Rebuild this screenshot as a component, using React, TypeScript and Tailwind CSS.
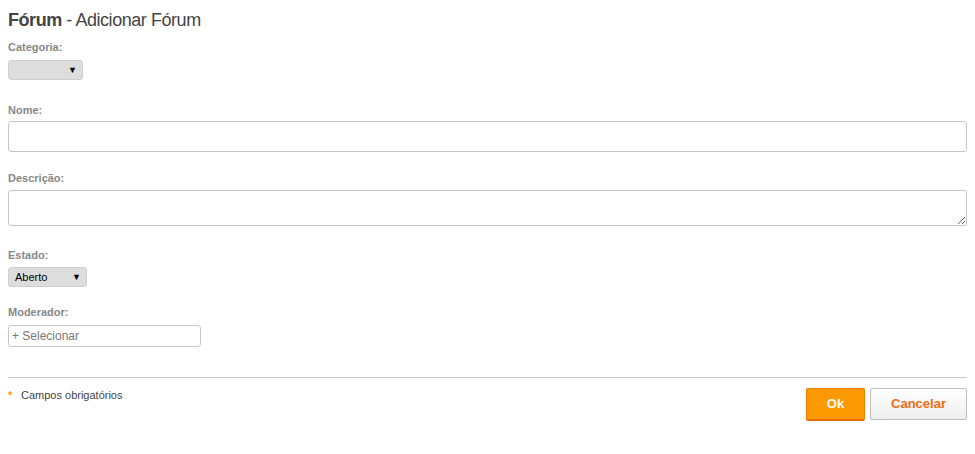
import React from 'react';

const Label = ({ children, className = '' }: { children: React.ReactNode; className?: string }) => (
  <label className={`block text-[11px] leading-[13px] font-bold text-[#888] ${className}`}>{children}</label>
);

const FakeSelect = ({ value, width, className = '' }: { value: string; width: string; className?: string }) => (
  <div
    className={`flex items-center justify-between h-[20px] ${width} bg-[#dddddd] border border-[#cfcfcf] rounded-[3px] pl-[6px] pr-[5px] text-[11px] text-black ${className}`}
  >
    <span>{value}</span>
    <span className="text-[9px] leading-none">▼</span>
  </div>
);

export default function App() {
  return (
    <div className="font-['Liberation_Sans',Arial,sans-serif] px-2 w-full text-[#444]">
      <h1 className="mt-[10px] text-[18px] leading-[20px] text-[#444] tracking-[-0.45px]">
        <span className="font-bold">Fórum</span> - Adicionar Fórum
      </h1>

      <Label className="mt-[11px]">Categoria:</Label>
      <FakeSelect value="" width="w-[75px]" className="mt-[6px]" />

      <Label className="mt-[24px]">Nome:</Label>
      <input
        type="text"
        className="block mt-[4px] w-full h-[31px] border border-[#c6c6c6] rounded-[3px] outline-none px-1 text-[12px]"
      />

      <Label className="mt-[20px]">Descrição:</Label>
      <textarea className="block mt-[5px] w-full h-[36px] border border-[#c6c6c6] rounded-[3px] outline-none px-1 text-[12px]" />

      <Label className="mt-[23px]">Estado:</Label>
      <FakeSelect value="Aberto" width="w-[79px]" className="mt-[5px]" />

      <Label className="mt-[19px]">Moderador:</Label>
      <div className="mt-[6px] w-[193px] h-[22px] border border-[#c6c6c6] rounded-[3px] flex items-center pl-[3px] text-[12px] text-[#777]">
        + Selecionar
      </div>

      <div className="mt-[30px] border-t border-[#c8c8c8]" />

      <div className="flex justify-between items-start mt-[10px]">
        <div className="flex items-center mt-[1px] text-[11px] leading-[13px] text-[#444]">
          <span className="text-[#f5a000] font-bold w-[13px]">*</span>
          <span>Campos obrigatórios</span>
        </div>
        <div className="flex gap-[5px]">
          <button className="w-[59px] h-[33px] bg-[#fb9a00] border border-[#f47a00] border-b-[2px] border-b-[#f06a00] rounded-[2px] text-white font-bold text-[13px]">
            Ok
          </button>
          <button className="w-[97px] h-[32px] bg-gradient-to-b from-white to-[#efefef] border border-[#bdbdbd] rounded-[2px] text-[#f26b0f] font-bold text-[13px]">
            Cancelar
          </button>
        </div>
      </div>
    </div>
  );
}
